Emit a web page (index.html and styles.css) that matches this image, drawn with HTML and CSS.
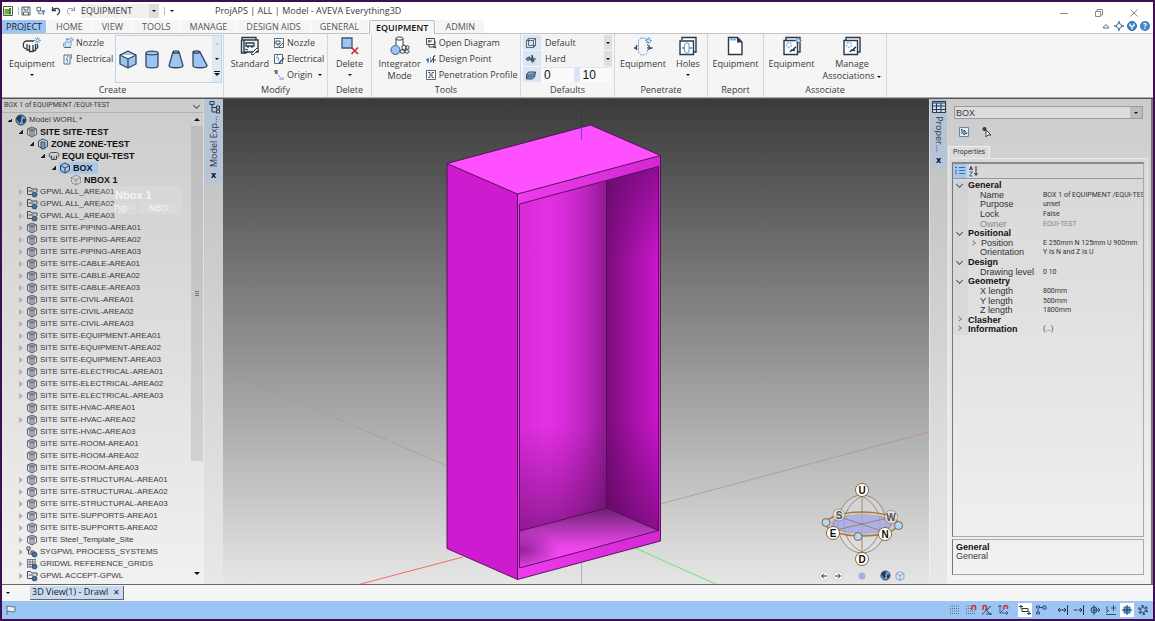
FILE: index.html
```html
<!DOCTYPE html>
<html lang="en">

<head>
    <meta charset="UTF-8">
    <meta name="viewport" content="width=device-width, initial-scale=1.0">
    <title>ProjAPS | ALL | Model - AVEVA Everything3D</title>
    <link rel="stylesheet" href="styles.css">
</head>

<body>
<!-- icon library -->
<svg class="defs" aria-hidden="true">
    <symbol id="i-site" viewBox="0 0 12 12"><path d="M1.500 3L6 1l4.500 2v5.500L6 11 1.500 8.500zM1.500 3h9M4 3.500V9.500M8 3.500V9.500M6 4v7M3.500 5L6 4l2.500 1" fill="none" stroke="#4b5764" stroke-width=".9"/></symbol>
    <symbol id="i-zone" viewBox="0 0 12 12"><path d="M1.500 3L6 1l4.500 2v5.500L6 11 1.500 8.500z" fill="none" stroke="#3f4b59"/><path d="M4 4h4v6l-2 1-2-1z" fill="#6c9fd2" stroke="#3f4b59"/></symbol>
    <symbol id="i-equi" viewBox="0 0 12 12"><path d="M3 7.500C.5 7.500.5 2.500 3.500 2.500h5c3 0 3 4.500 1 5M3.500 5.500v4h2.500V6.500M6 9.500h2.500V5.500" fill="none" stroke="#3f4b59"/></symbol>
    <symbol id="i-box" viewBox="0 0 12 12"><path d="M6 1l4.500 2.500v5L6 11 1.500 8.500v-5zM1.500 3.500L6 6l4.500-2.500M6 6v5" fill="#9cc5ef" stroke="#33475c" stroke-linejoin="round"/></symbol>
    <symbol id="i-nbox" viewBox="0 0 12 12"><path d="M6 1l4.500 2.500v5L6 11 1.500 8.500v-5zM1.500 3.500L6 6l4.500-2.500M6 6v5" fill="none" stroke="#777" stroke-dasharray="2 1"/></symbol>
    <symbol id="i-world" viewBox="0 0 12 12"><circle cx="6" cy="6" r="5" fill="#6fa3da" stroke="#2b3d50"/><path d="M3 2l3-.5 1 2L5.500 5 6 7 4.500 9.500 3 7 1.500 5zM8 5l2.500 0-.5 3-2 1.500L7.500 7z" fill="#26384c"/></symbol>
    <symbol id="i-gpwl" viewBox="0 0 12 12"><path d="M1.500 8.500v-7h3l1 1.500h5.500v3M2 8.500h4M2.500 5h5" fill="none" stroke="#3f4b59"/><circle cx="8.500" cy="8.500" r="2.500" fill="#456f9e" stroke="#26384c" stroke-width=".7"/></symbol>
    <symbol id="i-sys" viewBox="0 0 12 12"><path d="M1 1h3v3H1zM2.500 4v4H6M5 5h3v2H5z" fill="none" stroke="#3f4b59"/><circle cx="8.500" cy="8.500" r="2.500" fill="#456f9e" stroke="#26384c" stroke-width=".7"/></symbol>
    <symbol id="i-grid" viewBox="0 0 12 12"><path d="M1.500 1v9M4 1v9M6.500 1v9M9 1v6M1 1.500h9M1 4h9M1 6.500h8M1 9h5" fill="none" stroke="#5a6672" stroke-width=".8"/><circle cx="8.500" cy="8.500" r="2.500" fill="#456f9e" stroke="#26384c" stroke-width=".7"/></symbol>

    <symbol id="i-app" viewBox="0 0 10 10"><path d="M.5.500h9v9h-9z" fill="#fff" stroke="#4a5a50"/><path d="M1.500 3h4.500v5.500H1.500z" fill="#69b32d"/><path d="M6 2h2v6.500H6z" fill="#3f8a1f"/></symbol>
    <symbol id="i-save" viewBox="0 0 10 10"><path d="M1 1h8v8H1zM3 1v3h4V1M2.500 9V6h5v3" fill="none" stroke="#56606b"/></symbol>
    <symbol id="i-link" viewBox="0 0 11 10"><path d="M1 1h4v4H1zM3 5v3h3" fill="none" stroke="#56606b"/><path d="M6 4h4v3H6z" fill="#5b9bd5"/><path d="M8 7v2.500" stroke="#3c4854"/></symbol>
    <symbol id="i-undo" viewBox="0 0 10 10"><path d="M1.500 1v3.500H5M1.500 4.500C4 1 9 2 8.500 5.500 8.300 7.500 7 8.500 6 9" fill="none" stroke="#2d3e50" stroke-width="1.300"/></symbol>
    <symbol id="i-redo" viewBox="0 0 10 10"><path d="M8.500 1v3.500H5M8.500 4.500C6 1 1 2 1.500 5.500 1.700 7.500 3 8.500 4 9" fill="none" stroke="#8a929a"/></symbol>

    <symbol id="i-gear" viewBox="0 0 8 8"><path d="M4 0v8M0 4h8M1.200 1.200l5.600 5.600M6.800 1.200L1.200 6.800" stroke="#5b9bd5"/><circle cx="4" cy="4" r="1.800" fill="#f5f5f5" stroke="#5b9bd5"/></symbol>
    <symbol id="b-equip" viewBox="0 0 20 20"><path d="M5 13C0 13 0 5 5 5h7M15 8c2 3 0 5-2 5M5 8v6h2.500v-5M7.500 14v1.500H11V9M11 14.500h2.500V8" fill="none" stroke="#2b3a4a" stroke-width="1.300"/><use href="#i-gear" x="12" y="1" width="7" height="7"/></symbol>
    <symbol id="b-std" viewBox="0 0 20 20"><path d="M2 4v-2.500h14V4M2 4h16v12H4V4M1.500 4v13h5" fill="none" stroke="#2b3a4a" stroke-width="1.400"/><path d="M6 7h8v3H6zM8 10v2M12 10v2" fill="#fff" stroke="#2b3a4a" stroke-width="1.300"/><path d="M5 13l3 1M6 17l2-1M11 18l6-6 1.500 1.500L13 19z" fill="#fff" stroke="#2b3a4a"/></symbol>
    <symbol id="b-del" viewBox="0 0 20 20"><path d="M2 2h10v10H2z" fill="#9cc5f5" stroke="#41566d" stroke-width="1.300"/><path d="M11.500 11.500l6.500 6.500M18 11.500L11.500 18" stroke="#c8283f" stroke-width="1.700"/></symbol>
    <symbol id="b-integ" viewBox="0 0 20 20"><path d="M6 9V2.500C6 .5 13 .5 13 2.500V9M6 3c1 1.500 6 1.500 7 0" fill="#fff" stroke="#2b3a4a"/><circle cx="5.500" cy="14" r="4.500" fill="#9cc5f5" stroke="#34618e"/><ellipse cx="14" cy="11.500" rx="2" ry="2.500" fill="none" stroke="#2b3a4a"/><ellipse cx="12.500" cy="15.500" rx="2.500" ry="1.700" fill="none" stroke="#2b3a4a"/><ellipse cx="17" cy="15.500" rx="2.200" ry="1.700" fill="none" stroke="#2b3a4a"/><ellipse cx="17.500" cy="11.500" rx="1.500" ry="1.800" fill="none" stroke="#2b3a4a"/></symbol>
    <symbol id="b-pen" viewBox="0 0 20 20"><rect x="5.500" y="2" width="9" height="17" rx="4" fill="none" stroke="#5b9bd5" stroke-dasharray="2 1"/><path d="M1 12h3M3.500 9v5M16 12h3.500M16 9v5" stroke="#2b3a4a" stroke-width="1.300"/><use href="#i-gear" x="12" y="1" width="7" height="7"/></symbol>
    <symbol id="b-holes" viewBox="0 0 20 20"><path d="M4 4V1.500h14V16h-2M2 5h13.500v13.500H2z" fill="#fff" stroke="#2b3a4a" stroke-width="1.400"/><rect x="6.500" y="7" width="4.500" height="10" rx="2" fill="#fff" stroke="#5b9bd5"/><path d="M4 12h2M11.500 12H14" stroke="#2b3a4a"/></symbol>
    <symbol id="b-report" viewBox="0 0 20 20"><path d="M3.500 1.500h9l4.500 4.500v12.500H3.500z" fill="#fff" stroke="#2b3a4a" stroke-width="1.400"/><path d="M12 1.500V6.500h5z" fill="#2b3a4a"/><path d="M5 3.500h6" stroke="#7eb3ea" stroke-width="2"/></symbol>
    <symbol id="b-assoc" viewBox="0 0 20 20"><path d="M4 4V1.500h14V16h-2M2 4.500h13.500v14H2z" fill="#fff" stroke="#2b3a4a" stroke-width="1.400"/><circle cx="7" cy="9" r="2.500" fill="none" stroke="#84b5e8" stroke-width="1.400" stroke-dasharray="2 1"/><path d="M8 16c1-2 2-1 3-2s1-2 3-3M9 14l4 .5" fill="none" stroke="#2b3a4a" stroke-width="1.400"/></symbol>

    <symbol id="s-nozzle" viewBox="0 0 12 12"><path d="M3 5h6v3.500C8 11 4 11 3 8.500zM1.500 6v4M5 2v2" fill="#d5e7fa" stroke="#6ba3da"/><path d="M4 2h3M2 10.500h7" stroke="#596878"/><use href="#i-gear" x="7" y="0" width="5" height="5"/></symbol>
    <symbol id="s-elec" viewBox="0 0 12 12"><path d="M2 2h6v9H2z" fill="#fff" stroke="#596878"/><path d="M6 3L4 7h2L5 10" fill="none" stroke="#3f8bd8"/><path d="M9.500 1v5" stroke="#5b9bd5"/></symbol>
    <symbol id="s-mnozzle" viewBox="0 0 12 12"><path d="M1.500 1.500h9v9h-9z" fill="#fff" stroke="#596878"/><path d="M3 4h4v3H3zM5 7v2M6 10l4.500-4.500" fill="none" stroke="#3a4958"/></symbol>
    <symbol id="s-melec" viewBox="0 0 12 12"><path d="M1.500 1.500h8v9h-8z" fill="#fff" stroke="#596878"/><path d="M5 2L3.500 5H6L5 8" fill="none" stroke="#5b9bd5"/><path d="M6 10l5-5" stroke="#3a4958" stroke-width="1.500"/></symbol>
    <symbol id="s-origin" viewBox="0 0 12 12"><path d="M1 2h4M2 4h3M3 1v4" stroke="#3a4958"/><path d="M5 6l2 2" stroke="#888"/><path d="M6 10h5M8 8v3M10 8v3" stroke="#84b5e8"/></symbol>
    <symbol id="s-diagram" viewBox="0 0 12 12"><path d="M1.500 1.500h8v6h-8zM3 4h4M4 3v3M10 4v6H4V8" fill="none" stroke="#3a4958"/><path d="M8 9l3 2" stroke="#3a4958" stroke-width="1.500"/></symbol>
    <symbol id="s-point" viewBox="0 0 12 12"><path d="M1 7h3M8 7h3M3 5v5M8.500 3v7M6 9l4-7" fill="none" stroke="#3a4958"/><path d="M5.500 4v6" stroke="#5b9bd5"/></symbol>
    <symbol id="s-profile" viewBox="0 0 12 12"><path d="M1.500 1.500h9v9h-9z" fill="#fff" stroke="#596878"/><path d="M3 3.500h2v5H3M9 3.500H7v5h2M5 6h2" fill="none" stroke="#596878"/></symbol>
    <symbol id="s-wire" viewBox="0 0 12 12"><path d="M1.500 3.500h7v7h-7zM3.500 1.500h7v7M1.500 3.500l2-2M8.500 3.500l2-2M8.500 10.500l2-2M3.500 2v6.500h7" fill="none" stroke="#3a4958" stroke-width=".8"/></symbol>
    <symbol id="s-hard" viewBox="0 0 12 12"><path d="M1 6h10M4 3.500l3 5V2l2 7" fill="none" stroke="#3a4958" stroke-width="1.200"/><circle cx="3" cy="6" r="1.500" fill="#84b5e8" stroke="#3a4958"/></symbol>
    <symbol id="s-level" viewBox="0 0 12 12"><path d="M1.500 6l2-3h7l-1 5-2 2h-6z" fill="#84b5e8" stroke="#3a4958"/><path d="M1.500 6h6l3-3M1.500 8h6l2-2" fill="none" stroke="#3a4958"/></symbol>

    <symbol id="g-box" viewBox="0 0 20 22"><path d="M10 3l8 4v9l-8 4-8-4V7zM2 7l8 4 8-4M10 11v9" fill="#9cc5f5" stroke="#33475c" stroke-width="1.300" stroke-linejoin="round"/></symbol>
    <symbol id="g-cyl" viewBox="0 0 20 22"><path d="M4 5v13c0 2.500 12 2.500 12 0V5c0-2.500-12-2.500-12 0 0 2.500 12 2.500 12 0" fill="#9cc5f5" stroke="#33475c" stroke-width="1.300"/></symbol>
    <symbol id="g-cone" viewBox="0 0 20 22"><path d="M7 4L3 17.500c0 3 14 3 14 0L13 4c0-1.500-6-1.500-6 0 0 1.500 6 1.500 6 0" fill="#9cc5f5" stroke="#33475c" stroke-width="1.300"/></symbol>
    <symbol id="g-snout" viewBox="0 0 20 22"><path d="M3 4v13.500c0 3 14 3 14 0L10 4c0-1.500-7-1.500-7 0 0 1.500 7 1.500 7 0" fill="#9cc5f5" stroke="#33475c" stroke-width="1.300"/></symbol>
</svg>

<div class="window">
    <header class="title-bar">
        <div class="quick-access">
            <svg class="icon-10"><use href="#i-app"/></svg>
            <span class="divider"></span>
            <button class="icon-btn" aria-label="Save"><svg class="icon-10"><use href="#i-save"/></svg></button>
            <button class="icon-btn" aria-label="Link"><svg class="icon-10"><use href="#i-link"/></svg></button>
            <button class="icon-btn" aria-label="Undo"><svg class="icon-10"><use href="#i-undo"/></svg></button>
            <button class="icon-btn" aria-label="Redo"><svg class="icon-10"><use href="#i-redo"/></svg></button>
            <span class="select quick-select"><select aria-label="Module"><option>EQUIPMENT</option></select></span>
            <span class="divider"></span>
            <button class="icon-btn" aria-label="More"><span class="caret"></span></button>
        </div>
        <div class="window-title">ProjAPS | ALL | Model - AVEVA Everything3D</div>
        <div class="window-controls">
            <button class="icon-btn" aria-label="Minimize"><svg class="icon-10" viewBox="0 0 10 10"><path d="M1 5.500h8" stroke="#888"/></svg></button>
            <button class="icon-btn" aria-label="Restore"><svg class="icon-10" viewBox="0 0 10 10"><path d="M1.500 3.500h5v5h-5zM3 3V1.500h5.500V7H7" fill="none" stroke="#888"/></svg></button>
            <button class="icon-btn" aria-label="Close"><svg class="icon-10" viewBox="0 0 10 10"><path d="M1.500 1.500l7 7M8.500 1.500l-7 7" stroke="#888"/></svg></button>
        </div>
    </header>

    <nav class="tabs">
        <button class="tab project">PROJECT</button>
        <button class="tab">HOME</button>
        <button class="tab">VIEW</button>
        <button class="tab">TOOLS</button>
        <button class="tab">MANAGE</button>
        <button class="tab">DESIGN AIDS</button>
        <button class="tab">GENERAL</button>
        <button class="tab active">EQUIPMENT</button>
        <button class="tab">ADMIN</button>
        <div class="help-icons">
            <button class="icon-btn" aria-label="Collapse"><svg class="icon-10" viewBox="0 0 10 10"><path d="M2.500 6L5 3.500 7.500 6v1h-5z" fill="#fff" stroke="#596878"/></svg></button>
            <button class="icon-btn" aria-label="Focus"><svg class="icon-10" viewBox="0 0 10 10"><path d="M5 0v3M5 7v3M0 5h3M7 5h3" stroke="#5b9bd5" stroke-width="2"/><circle cx="5" cy="5" r="2.500" fill="#fff" stroke="#596878"/></svg></button>
            <button class="icon-btn" aria-label="Account"><svg class="icon-10" viewBox="0 0 10 10"><circle cx="5" cy="5" r="4.500" fill="#3f87c9" stroke="#2a659e"/><path d="M3 2.500v2l2 1 2-1v-2M5 5v3.500" fill="none" stroke="#fff" stroke-width="1.300"/></svg></button>
            <button class="icon-btn help" aria-label="Help">?</button>
        </div>
    </nav>

    <section class="ribbon">
        <div class="group g-create">
            <div class="group-body">
                <button class="big"><svg class="icon-20"><use href="#b-equip"/></svg>Equipment<span class="caret"></span></button>
                <div class="stack">
                    <button class="small"><svg class="icon-12"><use href="#s-nozzle"/></svg>Nozzle</button>
                    <button class="small"><svg class="icon-12"><use href="#s-elec"/></svg>Electrical</button>
                </div>
                <div class="gallery">
                    <button class="shape" aria-label="Box"><svg><use href="#g-box"/></svg></button>
                    <button class="shape" aria-label="Cylinder"><svg><use href="#g-cyl"/></svg></button>
                    <button class="shape" aria-label="Cone"><svg><use href="#g-cone"/></svg></button>
                    <button class="shape" aria-label="Snout"><svg><use href="#g-snout"/></svg></button>
                    <div class="gallery-scroll">
                        <span class="caret up"></span>
                        <span class="caret"></span>
                        <span class="caret more"></span>
                    </div>
                </div>
            </div>
            <div class="group-label">Create</div>
        </div>
        <div class="group g-modify">
            <div class="group-body">
                <button class="big"><svg class="icon-20"><use href="#b-std"/></svg>Standard</button>
                <div class="stack">
                    <button class="small"><svg class="icon-12"><use href="#s-mnozzle"/></svg>Nozzle</button>
                    <button class="small"><svg class="icon-12"><use href="#s-melec"/></svg>Electrical</button>
                    <button class="small"><svg class="icon-12"><use href="#s-origin"/></svg>Origin<span class="caret"></span></button>
                </div>
            </div>
            <div class="group-label">Modify</div>
        </div>
        <div class="group g-delete">
            <div class="group-body">
                <button class="big"><svg class="icon-20"><use href="#b-del"/></svg>Delete<span class="caret"></span></button>
            </div>
            <div class="group-label">Delete</div>
        </div>
        <div class="group g-tools">
            <div class="group-body">
                <button class="big"><svg class="icon-20"><use href="#b-integ"/></svg>Integrator<br>Mode</button>
                <div class="stack">
                    <button class="small"><svg class="icon-12"><use href="#s-diagram"/></svg>Open Diagram</button>
                    <button class="small"><svg class="icon-12"><use href="#s-point"/></svg>Design Point</button>
                    <button class="small"><svg class="icon-12"><use href="#s-profile"/></svg>Penetration Profile</button>
                </div>
            </div>
            <div class="group-label">Tools</div>
        </div>
        <div class="group g-defaults">
            <div class="defaults">
                <div class="default-row"><svg class="icon-12"><use href="#s-wire"/></svg><span class="select"><select aria-label="Representation"><option>Default</option></select></span></div>
                <div class="default-row"><svg class="icon-12"><use href="#s-hard"/></svg><span class="select"><select aria-label="Obstruction"><option>Hard</option></select></span></div>
                <div class="default-row"><svg class="icon-12"><use href="#s-level"/></svg><input type="text" value="0" aria-label="Level from"><span class="row-gap"></span><input type="text" value="10" aria-label="Level to"></div>
            </div>
            <div class="group-label">Defaults</div>
        </div>
        <div class="group g-penetrate">
            <div class="group-body">
                <button class="big"><svg class="icon-20"><use href="#b-pen"/></svg>Equipment</button>
                <button class="big"><svg class="icon-20"><use href="#b-holes"/></svg>Holes<span class="caret"></span></button>
            </div>
            <div class="group-label">Penetrate</div>
        </div>
        <div class="group g-report">
            <div class="group-body">
                <button class="big"><svg class="icon-20"><use href="#b-report"/></svg>Equipment</button>
            </div>
            <div class="group-label">Report</div>
        </div>
        <div class="group g-associate">
            <div class="group-body">
                <button class="big"><svg class="icon-20" viewBox="0 0 20 20"><use href="#b-assoc"/><use href="#i-gear" x="13" y="1" width="7" height="7"/></svg>Equipment</button>
                <button class="big"><svg class="icon-20"><use href="#b-assoc"/></svg>Manage<span>Associations<span class="caret inline"></span></span></button>
            </div>
            <div class="group-label">Associate</div>
        </div>
    </section>

    <main class="workspace">
        <aside class="explorer">
            <div class="select current-element"><select aria-label="Current element"><option>BOX 1 of EQUIPMENT /EQUI-TEST</option></select></div>
            <div class="explorer-body">
                <ul class="tree">
                    <li><div class="node open"><svg><use href="#i-world"/></svg><span>Model WORL *</span></div>
                        <ul>
                            <li><div class="node open bold"><svg><use href="#i-site"/></svg><span>SITE SITE-TEST</span></div>
                                <ul>
                                    <li><div class="node open bold"><svg><use href="#i-zone"/></svg><span>ZONE ZONE-TEST</span></div>
                                        <ul>
                                            <li><div class="node open bold"><svg><use href="#i-equi"/></svg><span>EQUI EQUI-TEST</span></div>
                                                <ul>
                                                    <li><div class="node open bold selected"><svg><use href="#i-box"/></svg><span>BOX</span></div>
                                                        <ul>
                                                            <li><div class="node bold"><svg><use href="#i-nbox"/></svg><span>NBOX 1</span></div></li>
                                                        </ul>
                                                    </li>
                                                </ul>
                                            </li>
                                        </ul>
                                    </li>
                                </ul>
                            </li>
                            <li><div class="node closed"><svg><use href="#i-gpwl"/></svg><span>GPWL ALL_AREA01</span></div></li>
                            <li><div class="node closed"><svg><use href="#i-gpwl"/></svg><span>GPWL ALL_AREA02</span></div></li>
                            <li><div class="node closed"><svg><use href="#i-gpwl"/></svg><span>GPWL ALL_AREA03</span></div></li>
                            <li><div class="node closed"><svg><use href="#i-site"/></svg><span>SITE SITE-PIPING-AREA01</span></div></li>
                            <li><div class="node closed"><svg><use href="#i-site"/></svg><span>SITE SITE-PIPING-AREA02</span></div></li>
                            <li><div class="node closed"><svg><use href="#i-site"/></svg><span>SITE SITE-PIPING-AREA03</span></div></li>
                            <li><div class="node closed"><svg><use href="#i-site"/></svg><span>SITE SITE-CABLE-AREA01</span></div></li>
                            <li><div class="node closed"><svg><use href="#i-site"/></svg><span>SITE SITE-CABLE-AREA02</span></div></li>
                            <li><div class="node closed"><svg><use href="#i-site"/></svg><span>SITE SITE-CABLE-AREA03</span></div></li>
                            <li><div class="node closed"><svg><use href="#i-site"/></svg><span>SITE SITE-CIVIL-AREA01</span></div></li>
                            <li><div class="node closed"><svg><use href="#i-site"/></svg><span>SITE SITE-CIVIL-AREA02</span></div></li>
                            <li><div class="node closed"><svg><use href="#i-site"/></svg><span>SITE SITE-CIVIL-AREA03</span></div></li>
                            <li><div class="node closed"><svg><use href="#i-site"/></svg><span>SITE SITE-EQUIPMENT-AREA01</span></div></li>
                            <li><div class="node closed"><svg><use href="#i-site"/></svg><span>SITE SITE-EQUIPMENT-AREA02</span></div></li>
                            <li><div class="node closed"><svg><use href="#i-site"/></svg><span>SITE SITE-EQUIPMENT-AREA03</span></div></li>
                            <li><div class="node closed"><svg><use href="#i-site"/></svg><span>SITE SITE-ELECTRICAL-AREA01</span></div></li>
                            <li><div class="node closed"><svg><use href="#i-site"/></svg><span>SITE SITE-ELECTRICAL-AREA02</span></div></li>
                            <li><div class="node closed"><svg><use href="#i-site"/></svg><span>SITE SITE-ELECTRICAL-AREA03</span></div></li>
                            <li><div class="node"><svg><use href="#i-site"/></svg><span>SITE SITE-HVAC-AREA01</span></div></li>
                            <li><div class="node closed"><svg><use href="#i-site"/></svg><span>SITE SITE-HVAC-AREA02</span></div></li>
                            <li><div class="node"><svg><use href="#i-site"/></svg><span>SITE SITE-HVAC-AREA03</span></div></li>
                            <li><div class="node"><svg><use href="#i-site"/></svg><span>SITE SITE-ROOM-AREA01</span></div></li>
                            <li><div class="node"><svg><use href="#i-site"/></svg><span>SITE SITE-ROOM-AREA02</span></div></li>
                            <li><div class="node"><svg><use href="#i-site"/></svg><span>SITE SITE-ROOM-AREA03</span></div></li>
                            <li><div class="node closed"><svg><use href="#i-site"/></svg><span>SITE SITE-STRUCTURAL-AREA01</span></div></li>
                            <li><div class="node closed"><svg><use href="#i-site"/></svg><span>SITE SITE-STRUCTURAL-AREA02</span></div></li>
                            <li><div class="node closed"><svg><use href="#i-site"/></svg><span>SITE SITE-STRUCTURAL-AREA03</span></div></li>
                            <li><div class="node closed"><svg><use href="#i-site"/></svg><span>SITE SITE-SUPPORTS-AREA01</span></div></li>
                            <li><div class="node closed"><svg><use href="#i-site"/></svg><span>SITE SITE-SUPPORTS-AREA02</span></div></li>
                            <li><div class="node closed"><svg><use href="#i-site"/></svg><span>SITE Steel_Template_Site</span></div></li>
                            <li><div class="node closed"><svg><use href="#i-sys"/></svg><span>SYGPWL PROCESS_SYSTEMS</span></div></li>
                            <li><div class="node closed"><svg><use href="#i-grid"/></svg><span>GRIDWL REFERENCE_GRIDS</span></div></li>
                            <li><div class="node closed"><svg><use href="#i-gpwl"/></svg><span>GPWL ACCEPT-GPWL</span></div></li>
                        </ul>
                    </li>
                </ul>
                <div class="scrollbar">
                    <span class="scroll-arrow up"></span>
                    <div class="scroll-track"><div class="scroll-thumb"><span class="grip"></span></div></div>
                    <span class="scroll-arrow down"></span>
                </div>
                <!-- fading drag tooltip -->
                <div class="ghost-tip">
                    <div class="ghost-title">Nbox 1</div>
                    <div class="ghost-row"><span class="ghost-key">Typ&middot;</span><span class="ghost-value">NBO</span></div>
                </div>
            </div>
        </aside>
        <div class="side-strip left">
            <div class="side-tab">
                <svg class="side-icon" viewBox="0 0 14 14"><path d="M3 1.500h4v3H3zM5 5v7h4M5 7.500h4M9.500 6h3v3h-3zM9.500 10h3v3h-3z" fill="none" stroke="#2b3a4a"/></svg>
                <span class="side-text">Model Exp...</span>
                <button class="side-close" aria-label="Close">x</button>
            </div>
        </div>

        <div class="viewport">
            <svg class="scene" viewBox="223 98 706 485" preserveAspectRatio="xMidYMid slice">
                <defs>
                    <linearGradient id="backWall"><stop offset="0" stop-color="#d62bd6"/><stop offset=".3" stop-color="#e330e3"/><stop offset=".5" stop-color="#d92cd9"/><stop offset=".75" stop-color="#bd25bf"/><stop offset="1" stop-color="#8e1a92"/></linearGradient>
                    <linearGradient id="rightWall"><stop offset="0" stop-color="#790c7b"/><stop offset=".5" stop-color="#a311a5"/><stop offset="1" stop-color="#cb17cb"/></linearGradient>
                    <linearGradient id="shadeTop" x1="0" y1="0" x2="0" y2="1"><stop offset="0" stop-color="#600a66" stop-opacity=".6"/><stop offset=".25" stop-color="#600a66" stop-opacity="0"/></linearGradient>
                    <linearGradient id="shadeBottom" x1="0" y1="0" x2="0" y2="1"><stop offset=".7" stop-color="#4a064e" stop-opacity="0"/><stop offset="1" stop-color="#4a064e" stop-opacity=".5"/></linearGradient>
                    <linearGradient id="floor" x1="0" y1="0" x2="0" y2="1"><stop offset="0" stop-color="#6a2170"/><stop offset=".3" stop-color="#a834ac"/><stop offset=".65" stop-color="#ee45ee"/><stop offset="1" stop-color="#f44bf4"/></linearGradient>
                    <linearGradient id="frontTop" x1="0" x2="1"><stop offset="0" stop-color="#ed3bed"/><stop offset="1" stop-color="#d228d2"/></linearGradient>
                    <radialGradient id="floorDark"><stop offset="0" stop-color="#7a1c80" stop-opacity=".8"/><stop offset="1" stop-color="#7a1c80" stop-opacity="0"/></radialGradient>
                    <clipPath id="floorClip"><path d="M520 530l87-23 52 22.500L520 567z"/></clipPath>
                </defs>
                <path d="M222 368l225 97" stroke="#86a889" stroke-width=".6"/>
                <path d="M660 503l269-72" stroke="#b98f8f" stroke-width=".8"/>
                <path d="M357 584l106-28" stroke="#f26d6d"/>
                <path d="M635 547l83 37" stroke="#6fe46f"/>
                <path d="M581.500 98v30" stroke="#38384c"/>
                <path d="M581.500 562v22" stroke="#aab2d8"/>
                <path d="M447 162.500l70.500 30.500v385.500L447 547.500z" fill="#cf1bcf"/>
                <path d="M517.500 193l143-38.500V540l-143 38.500z" fill="url(#frontTop)"/>
                <path d="M447 162.500L590.500 124l70 30.500-143 38.500z" fill="#ff50ff"/>
                <path d="M519.500 203l87-23v327l-87 23z" fill="url(#backWall)"/>
                <path d="M519.500 203l87-23v327l-87 23z" fill="url(#shadeBottom)"/>
                <path d="M606.500 180l52-14.500v364l-52-22.500z" fill="url(#rightWall)"/>
                <path d="M606.500 180l52-14.500v364l-52-22.500z" fill="url(#shadeTop)"/>
                <path d="M606.500 180l52-14.500v364l-52-22.500z" fill="url(#shadeBottom)"/>
                <path d="M519.500 530l87-23 52 22.500-139 37.500z" fill="url(#floor)"/>
                <g clip-path="url(#floorClip)"><ellipse cx="522" cy="549" rx="36" ry="22" fill="url(#floorDark)"/></g>
                <path d="M447 162.500L590.500 124l70 30.500V540l-143 38.500-70.500-31zl70.500 30.500 143-38.500M517.500 193v385.500M519.500 567V203l139-37.500v364L519.500 567M606.500 180v327l-87 23M606.500 507l52 22.500" fill="none" stroke="#4d0b50" stroke-width=".9"/>
                <path d="M581.500 126v13" stroke="#7146e0"/>

                <!-- view compass -->
                <g fill="none" stroke="#8b7763" stroke-width=".8">
                    <ellipse cx="862" cy="523" rx="24" ry="29" fill="#e8e8e8" fill-opacity=".35"/>
                    <path d="M862 495c-24 12-24 44 0 56M862 495c24 12 24 44 0 56M862 495v56"/>
                    <path d="M833 516l-6 5 6 7 29 7 23-2 13-8-4-7-32-4z" fill="#a5a9e4" fill-opacity=".45" stroke="none"/>
                    <ellipse cx="862" cy="523" rx="29" ry="10" fill="#a3a8e8" fill-opacity=".65"/>
                    <path d="M840 516l45 15M836 529l52-12"/>
                    <ellipse cx="862" cy="523" rx="36" ry="12" stroke="#a5793f" stroke-width="1.500"/>
                    <ellipse cx="862" cy="523" rx="34" ry="10" stroke="#e8ded2"/>
                </g>
                <g stroke="#8a6233" fill="#fff">
                    <circle cx="862" cy="489" r="6.500"/><circle cx="862" cy="558" r="6.500"/>
                    <circle cx="839" cy="514" r="6" fill-opacity=".5" stroke-opacity=".5"/><circle cx="891" cy="516" r="6.500" fill-opacity=".5" stroke-opacity=".5"/>
                    <circle cx="833" cy="532" r="6.500"/><circle cx="885" cy="533" r="6.500"/>
                    <g fill="#b3d6fb"><circle cx="826" cy="521.500" r="4"/><circle cx="898.500" cy="524.500" r="4"/><circle cx="858" cy="535.500" r="4"/></g>
                </g>
                <g class="compass-text">
                    <text x="862" y="493">U</text><text x="862" y="562">D</text><text x="833" y="536">E</text><text x="885" y="537">N</text>
                    <text class="far" x="839" y="518">S</text><text class="far" x="891" y="520">W</text>
                </g>
                <circle cx="824" cy="575" r="4.500" fill="#fff" stroke="#ccc"/><path d="M827 575h-5M824 572.500l-2.500 2.500 2.500 2.500" fill="none" stroke="#222"/>
                <circle cx="838" cy="575" r="4.500" fill="#fff" stroke="#ccc"/><path d="M835 575h5M838 572.500l2.500 2.500-2.500 2.500" fill="none" stroke="#222"/>
                <circle cx="862" cy="575" r="3.500" fill="#a9aee0"/>
                <use href="#i-world" x="880" y="569" width="11" height="11"/>
                <path d="M900 570.500l4 2v5l-4 2-4-2v-5zM896 572.500l4 2 4-2M900 574.500v5" fill="#d6e4f2" stroke="#7d97b0" stroke-width=".8"/>
            </svg>
        </div>

        <div class="side-strip right">
            <div class="side-tab">
                <svg class="side-icon" viewBox="0 0 14 14"><path d="M.5 1.500h13v11H.5z" fill="#c7dcf2" stroke="#2b3a4a"/><path d="M.5 3h13M.5 6h13M.5 9.500h13M4.500 3v9M9 3v9" stroke="#2b3a4a"/></svg>
                <span class="side-text">Proper...</span>
                <button class="side-close" aria-label="Close">x</button>
            </div>
        </div>
        <aside class="properties">
            <div class="select element-select"><select aria-label="Element"><option>BOX</option></select></div>
            <div class="pick-tools">
                <button class="icon-btn" aria-label="Pick element"><svg class="icon-12" viewBox="0 0 12 12"><path d="M1.500 1.500h9v9h-9z" fill="#e4eefa" stroke="#5b87b5"/><path d="M3 4l1-1v5M6 4v5l1.500-1.500H9z" fill="none" stroke="#2b3a4a"/></svg></button>
                <button class="icon-btn" aria-label="Pick point"><svg class="icon-12" viewBox="0 0 12 12"><circle cx="3.500" cy="3" r="2" fill="#2b3a4a"/><path d="M5 4v7l2-2h3z" fill="#fff" stroke="#2b3a4a"/></svg></button>
            </div>
            <div class="page-tabs"><button class="page-tab">Properties</button></div>
            <div class="page">
                <div class="grid-box">
                    <div class="grid-tools">
                        <button class="icon-btn on" aria-label="Categorized"><svg class="icon-12" viewBox="0 0 12 12"><path d="M1 2.500h2M5 2.500h6M5 5.500h6M5 8.500h6M2 4.500v5" stroke="#2f6fb0"/></svg></button>
                        <button class="icon-btn" aria-label="Alphabetical"><svg class="icon-12" viewBox="0 0 12 12"><path d="M1.500 5L3 1.500 4.500 5M2 4h2" fill="none" stroke="#333"/><path d="M1.500 7h3l-3 4h3" fill="none" stroke="#2f6fb0"/><path d="M8 1v9M6.500 8L8 10.500 9.500 8" fill="none" stroke="#333"/></svg></button>
                    </div>
                    <table class="prop-grid">
                        <tr class="cat"><td class="exp open"></td><th>General</th><td></td></tr>
                        <tr><td class="exp"></td><th>Name</th><td>BOX 1 of EQUIPMENT /EQUI-TES</td></tr>
                        <tr><td class="exp"></td><th>Purpose</th><td>unset</td></tr>
                        <tr><td class="exp"></td><th>Lock</th><td>False</td></tr>
                        <tr class="readonly"><td class="exp"></td><th>Owner</th><td>EQUI-TEST</td></tr>
                        <tr class="cat"><td class="exp open"></td><th>Positional</th><td></td></tr>
                        <tr><td class="exp"></td><th class="sub">Position</th><td>E 250mm N 125mm U 900mm</td></tr>
                        <tr><td class="exp"></td><th>Orientation</th><td>Y is N and Z is U</td></tr>
                        <tr class="cat"><td class="exp open"></td><th>Design</th><td></td></tr>
                        <tr><td class="exp"></td><th>Drawing level</th><td>0 10</td></tr>
                        <tr class="cat"><td class="exp open"></td><th>Geometry</th><td></td></tr>
                        <tr><td class="exp"></td><th>X length</th><td>800mm</td></tr>
                        <tr><td class="exp"></td><th>Y length</th><td>500mm</td></tr>
                        <tr><td class="exp"></td><th>Z length</th><td>1800mm</td></tr>
                        <tr class="cat"><td class="exp shut"></td><th>Clasher</th><td></td></tr>
                        <tr class="cat"><td class="exp shut"></td><th>Information</th><td>(...)</td></tr>
                    </table>
                </div>
                <div class="help-box"><strong>General</strong><span>General</span></div>
            </div>
        </aside>
    </main>

    <div class="doc-tabs">
        <span class="caret"></span>
        <div class="doc-tab">3D View(1) - Drawl<button class="icon-btn" aria-label="Close tab">&#10005;</button></div>
    </div>

    <footer class="status-bar">
        <svg class="icon-12" viewBox="0 0 12 12"><path d="M2 11V2M2 2.500c3-1.500 4 1.500 8 0v5c-4 1.500-5-1.500-8 0" fill="#e8f1fb" stroke="#56708c"/></svg>
        <div class="status-tools">
            <button class="icon-btn" aria-label="Grid"><svg class="icon-12" viewBox="0 0 12 12"><path d="M1 2h10M1 4.500h10M1 7h10M1 9.500h10" stroke="#56708c" stroke-dasharray="1 1"/></svg></button>
            <button class="icon-btn" aria-label="Snap grid"><svg class="icon-12" viewBox="0 0 12 12"><path d="M1 2h5M1 4.500h5M1 7h10M1 9.500h10" stroke="#56708c" stroke-dasharray="1 1"/><path d="M7 6V3c0-2 3.500-2 3.500 0v3" fill="none" stroke="#d02c3c" stroke-width="1.600"/></svg></button>
            <button class="icon-btn" aria-label="Snap angle"><svg class="icon-12" viewBox="0 0 12 12"><path d="M1 10.500L10 2M4 5l6 5.500M5 10h6" stroke="#2b3a4a"/><path d="M2 6V3c0-2 3.500-2 3.500 0v3" fill="none" stroke="#d02c3c" stroke-width="1.600"/></svg></button>
            <button class="icon-btn" aria-label="Snap axis"><svg class="icon-12" viewBox="0 0 12 12"><path d="M3 1v8h8M1 3l2-2 2 2M3 9l5-5M9 7l2 2-2 2" fill="none" stroke="#34618e"/><path d="M7 5V3c0-2 3.500-2 3.500 0v2" fill="none" stroke="#d02c3c" stroke-width="1.600"/></svg></button>
            <span class="tool-gap"></span>
            <button class="icon-btn on" aria-label="Route"><svg class="icon-12" viewBox="0 0 12 12"><path d="M0 2.500h4M2 1v4M3 4.500h6v3H3zM8 9.500h4M10 7v4" fill="none" stroke="#2b3a4a"/></svg></button>
            <button class="icon-btn" aria-label="Nodes"><svg class="icon-12" viewBox="0 0 12 12"><path d="M1.500 2h3v2h-3zM8 2h3v3H8zM1.500 8h3v2h-3zM5 3.500h3M3 5v3" fill="none" stroke="#34506e"/></svg></button>
            <span class="tool-gap"></span>
            <button class="icon-btn" aria-label="Distance"><svg class="icon-12" viewBox="0 0 12 12"><path d="M1 6h8M3 4L1 6l2 2M7 4l2 2-2 2M10.500 1v10" fill="none" stroke="#24364a"/></svg></button>
            <button class="icon-btn" aria-label="Extend"><svg class="icon-12" viewBox="0 0 12 12"><path d="M1 6h3M5 6h4M7 4l2 2-2 2M10.500 1v10" fill="none" stroke="#24364a"/></svg></button>
            <button class="icon-btn" aria-label="Centre"><svg class="icon-12" viewBox="0 0 12 12"><circle cx="5" cy="6" r="3" fill="#6fa3da" stroke="#34506e"/><path d="M5 1v10M4 6h7M9 4l2 2-2 2" fill="none" stroke="#34506e"/></svg></button>
            <button class="icon-btn" aria-label="Offset"><svg class="icon-12" viewBox="0 0 12 12"><path d="M2 2v5M1 10.500h10M1 9l3-3M6 4h5M8.500 1v6" fill="none" stroke="#34506e"/></svg></button>
            <button class="icon-btn on" aria-label="Centre snap"><svg class="icon-12" viewBox="0 0 12 12"><path d="M3 3h6v6H3z" fill="#6fa3da" stroke="#2f6fb0"/><path d="M6 1v10M1 6h10" stroke="#12324f"/></svg></button>
            <button class="icon-btn" aria-label="Settings"><svg class="icon-12" viewBox="0 0 12 12"><circle cx="6" cy="6" r="4" fill="none" stroke="#34506e" stroke-width="2" stroke-dasharray="2.200 2"/><circle cx="6" cy="6" r="2.500" fill="none" stroke="#34506e"/></svg></button>
        </div>
    </footer>
</div>
</body>

</html>
```
FILE: styles.css
```css
* {
    box-sizing: border-box;
}

body {
    margin: 0;
    font-family: "Open Sans", "Noto Sans", sans-serif;
    font-size: 9px;
    line-height: 12px;
    color: #3a3a3a;
}

button,
select,
input {
    font: inherit;
    color: inherit;
    border: none;
    padding: 0;
    margin: 0;
    background: none;
}

svg {
    display: block;
    flex: none;
}

.defs {
    display: none;
}

.window {
    display: flex;
    flex-direction: column;
    height: 100vh;
    border: 2px solid #3d0f52;
    background: #fff;
}

.icon-10 {
    width: 10px;
    height: 10px;
}

.icon-12 {
    width: 12px;
    height: 12px;
}

.icon-20 {
    width: 20px;
    height: 20px;
}

.icon-btn {
    display: flex;
    align-items: center;
    justify-content: center;
}

.caret {
    width: 0;
    height: 0;
    border: 2px solid transparent;
    border-top-color: #111;
    border-bottom: none;
}

.caret.up {
    border-top: none;
    border-bottom: 2px solid #bbb;
}

.caret.inline {
    display: inline-block;
    margin-left: 3px;
    vertical-align: middle;
}

/* drop-downs */
.select {
    position: relative;
    display: flex;
    min-width: 0;
}

.select select {
    appearance: none;
    width: 100%;
    border-radius: 0;
}

.select::after {
    content: "";
    position: absolute;
    right: 3px;
    top: calc(50% - 1px);
    border: 2px solid transparent;
    border-top-color: #111;
    border-bottom: none;
    pointer-events: none;
}

/* title bar */
.title-bar {
    display: flex;
    align-items: center;
    flex: none;
    height: 18px;
}

.quick-access {
    display: flex;
    align-items: center;
    gap: 5px;
    width: 213px;
    padding-left: 1px;
}

.quick-access .divider:first-of-type {
    margin-right: -3px;
}

.divider {
    width: 1px;
    height: 8px;
    background: #bbb;
}

.quick-select {
    width: 78px;
    height: 14px;
    background: linear-gradient(90deg, #f0f0f0 68px, #dedede 68px);
}

.window-title {
    flex: 1;
}

.window-controls {
    display: flex;
    gap: 25px;
    padding: 4px 14px 0 0;
}

/* ribbon tabs */
.tabs {
    display: flex;
    align-items: flex-end;
    gap: 1px;
    flex: none;
    height: 14px;
    border-bottom: 1px solid #c4c4c4;
}

.tab {
    height: 13px;
    padding: 1px 9px 0;
    background: #f5f5f5;
    color: #555;
}

.tab.project {
    padding: 0 4px;
    background: #9bc3f3;
    color: #223;
}

.tab.active {
    height: 14px;
    margin-bottom: -1px;
    padding: 0 6px;
    border: 1px solid #b5bfca;
    border-bottom: none;
    border-radius: 2px 2px 0 0;
    color: #111;
    font-weight: 600;
}

.help-icons {
    display: flex;
    gap: 3px;
    margin: 0 3px 2px auto;
}

.help {
    width: 10px;
    height: 10px;
    border-radius: 50%;
    background: #3f87c9;
    color: #fff;
    font-weight: bold;
    font-size: 8px;
    line-height: 10px;
}

/* ribbon */
.ribbon {
    display: flex;
    flex: none;
    height: 64px;
    background: #f5f5f5;
    border-bottom: 1px solid #a8a8a8;
}

.group {
    display: flex;
    flex-direction: column;
    flex: none;
    border-right: 1px solid #cbd9ea;
}

.group-body {
    display: flex;
    justify-content: center;
    height: 49px;
}

.group-label {
    padding-top: 1px;
    text-align: center;
}

.g-create {
    width: 222px;
}

.g-create .group-body {
    justify-content: flex-start;
}

.g-modify {
    width: 104px;
}

.g-delete {
    width: 44px;
}

.g-tools {
    width: 149px;
}

.g-defaults {
    width: 94px;
}

.g-penetrate {
    width: 93px;
}

.g-report {
    width: 56px;
}

.g-associate {
    width: 123px;
}

.big {
    display: flex;
    flex-direction: column;
    align-items: center;
    padding: 2px 4px 0;
    min-width: 36px;
    white-space: nowrap;
}

.big .icon-20 {
    margin-bottom: 2px;
}

.big > .caret {
    margin-top: 4px;
}

.g-create .big {
    width: 60px;
}

.stack {
    display: flex;
    flex-direction: column;
    padding-top: 1px;
}

.small {
    display: flex;
    align-items: center;
    gap: 2px;
    height: 16px;
    white-space: nowrap;
}

.small .caret {
    margin-left: 3px;
}

.gallery {
    display: flex;
    align-items: center;
    flex: 1;
    margin: 1px 1px 0 2px;
    border: 1px solid #c3d3e6;
}

.shape {
    flex: 1;
    display: flex;
    justify-content: center;
}

.shape svg {
    width: 20px;
    height: 22px;
}

.gallery-scroll {
    display: flex;
    flex-direction: column;
    align-items: center;
    justify-content: space-around;
    align-self: stretch;
    width: 9px;
    background: #dfe8f3;
}

.caret.more {
    border-width: 3px 3px 0;
}

.caret.more::before {
    content: "";
    display: block;
    width: 6px;
    height: 1px;
    margin: -5px 0 0 -3px;
    background: #111;
}

.defaults {
    display: flex;
    flex-direction: column;
    gap: 1px;
    height: 49px;
    padding: 1px 2px 0;
}

.default-row {
    display: flex;
    align-items: center;
    height: 15px;
    background: #dbe6f4;
}

.default-row > .icon-12 {
    margin: 0 4px 0 2px;
}

.default-row .select {
    flex: 1;
    height: 15px;
    padding-left: 4px;
    background: linear-gradient(270deg, #dedede 8px, #f3f3f3 8px);
}

.default-row .select::after {
    right: 2px;
}

.default-row input {
    flex: 1;
    min-width: 0;
    height: 14px;
    padding-left: 3px;
    background: #fafafa;
    font: 12px/14px "Liberation Sans", Arial, sans-serif;
    color: #111;
}

.row-gap {
    width: 6px;
}

/* workspace */
.workspace {
    display: flex;
    flex: 1;
    min-height: 0;
    background: linear-gradient(#3b3b3b, #8e8e8e 50%, #e6e6e6);
    border-top: 1px solid #555;
    border-bottom: 1px solid #666;
    font-family: "Liberation Sans", Arial, sans-serif;
}

.explorer {
    display: flex;
    flex-direction: column;
    flex: none;
    width: 201px;
    background: rgba(243, 243, 243, .79);
}

.current-element {
    flex: none;
    height: 14px;
    padding-left: 2px;
    border-bottom: 1px solid #b0b0b0;
    font: 7px/13px Roboto, Arial, sans-serif;
}

.current-element::after,
.exp.open::before {
    width: 4px;
    height: 4px;
    border: solid #555;
    border-width: 0 1px 1px 0;
    transform: rotate(45deg);
}

.current-element::after {
    top: 4px;
    right: 4px;
}

.explorer-body {
    position: relative;
    display: flex;
    flex: 1;
    min-height: 0;
    overflow: hidden;
}

.tree,
.tree ul {
    list-style: none;
    margin: 0;
    padding: 0;
}

.tree {
    flex: 1;
    padding: 1px 0 0 3px;
    font-size: 8px;
}

.tree ul {
    padding-left: 11px;
}

.node {
    display: flex;
    align-items: center;
    height: 12px;
    white-space: nowrap;
}

.node svg {
    width: 12px;
    height: 12px;
    margin-right: 2px;
}

.node::before {
    content: "";
    flex: none;
    width: 10px;
    height: 6px;
}

.node.open::before {
    width: 4px;
    height: 4px;
    margin: 0 3px;
    background: linear-gradient(135deg, transparent 50%, #222 50%);
}

.node.closed::before {
    width: 4px;
    margin: 0 3px;
    background: #b0b0b0;
    clip-path: polygon(0 0, 100% 50%, 0 100%);
}

.node.bold {
    font-size: 9px;
    font-weight: bold;
    color: #111;
}

.node.selected svg {
    margin-right: 0;
    background: #a9c8ec;
}

.node.selected span {
    padding: 0 5px 0 2px;
    background: #a9c8ec;
}

.scrollbar {
    display: flex;
    flex-direction: column;
    align-items: center;
    width: 12px;
    margin-bottom: 4px;
}

.scroll-arrow {
    margin: 5px 0;
    border: 3px solid transparent;
}

.scroll-arrow.up {
    border-bottom-color: #111;
    border-top: none;
}

.scroll-arrow.down {
    border-top-color: #111;
    border-bottom: none;
}

.scroll-track {
    flex: 1;
    align-self: stretch;
}

.scroll-thumb {
    display: flex;
    align-items: center;
    justify-content: center;
    height: 76%;
    background: rgba(120, 120, 120, .2);
}

.grip {
    width: 4px;
    height: 5px;
    background: repeating-linear-gradient(#777 0 1px, transparent 1px 2px);
}

.ghost-tip {
    position: absolute;
    left: 99px;
    top: 73px;
    width: 80px;
    color: rgba(255, 255, 255, .75);
}

.ghost-title {
    height: 15px;
    padding-left: 14px;
    background: rgba(255, 255, 255, .12);
    font: bold 11px/18px "Liberation Sans", Arial, sans-serif;
}

.ghost-row {
    display: flex;
    gap: 2px;
    margin-top: 1px;
    font-size: 9px;
}

.ghost-key,
.ghost-value {
    background: rgba(255, 255, 255, .12);
}

.ghost-key {
    width: 36px;
    padding-left: 12px;
}

.ghost-value {
    flex: 1;
    padding-left: 10px;
}

/* docked side strips */
.side-strip {
    flex: none;
    width: 18px;
    padding: 1px;
    background: rgba(232, 232, 232, .76);
    border-left: 1px solid rgba(255, 255, 255, .4);
}

.side-strip.left {
    width: 20px;
}

.side-tab {
    display: flex;
    flex-direction: column;
    align-items: center;
    gap: 2px;
    padding-bottom: 2px;
    background: #b4c4da;
}

.side-icon {
    width: 14px;
    height: 14px;
}

.side-text {
    writing-mode: vertical-rl;
    font: 9px/16px "Open Sans", sans-serif;
}

.left .side-text {
    transform: rotate(180deg);
}

.side-close {
    font: bold 9px/12px "Open Sans", sans-serif;
    color: #111;
}

/* 3D view */
.viewport {
    flex: 1;
    min-width: 0;
    overflow: hidden;
}

.scene {
    width: 100%;
    height: 100%;
}

.compass-text {
    font-size: 10px;
    font-weight: bold;
    text-anchor: middle;
    fill: #111;
}

.compass-text .far {
    fill: #555;
}

/* properties panel */
.properties {
    display: flex;
    flex-direction: column;
    flex: none;
    width: 206px;
    padding: 7px 3px 5px 1px;
    background: rgba(243, 243, 243, .79);
    border-right: 2px solid #777;
}

.element-select {
    flex: none;
    height: 13px;
    margin: 0 5px 0 6px;
    padding-left: 1px;
    border: 1px solid #9a9a9a;
    background: linear-gradient(270deg, #bdbdbd 12px, #dcdcdc 12px);
    font-size: 9px;
}

.element-select::after {
    right: 4px;
}

.pick-tools {
    display: flex;
    gap: 11px;
    padding: 7px 0 8px 10px;
}

.page-tabs {
    display: flex;
}

.page-tab {
    height: 12px;
    padding: 0 4px;
    border: 1px solid rgba(255, 255, 255, .5);
    border-bottom: none;
    background: rgba(255, 255, 255, .25);
    font: 7px/11px Roboto, Arial, sans-serif;
}

.page {
    display: flex;
    flex-direction: column;
    gap: 2px;
    flex: 1;
    min-height: 0;
    padding: 3px;
    border: 1px solid rgba(255, 255, 255, .45);
    background: rgba(255, 255, 255, .15);
}

.grid-box {
    flex: 1;
    min-height: 0;
    border: 1px solid #aaa;
    border-top: 2px solid #888;
    border-left-color: #777;
    overflow: hidden;
}

.grid-tools {
    display: flex;
    height: 15px;
    border-bottom: 1px solid #999;
}

.grid-tools .icon-btn {
    width: 14px;
}

.grid-tools .on {
    background: #a9c8ec;
}

.prop-grid {
    table-layout: fixed;
    width: 100%;
    height: 154px;
    margin-top: 2px;
    border-collapse: collapse;
    color: #333;
}

.prop-grid td,
.prop-grid th {
    padding: 0;
    vertical-align: top;
    white-space: nowrap;
    font: 7px/8px Roboto, Arial, sans-serif;
}

.prop-grid th {
    width: 75px;
    padding-left: 12px;
    text-align: left;
    font: 9px/9px "Liberation Sans", Arial, sans-serif;
}

.prop-grid td.exp {
    width: 15px;
    padding: 1px 0 0 4px;
    background: rgba(160, 170, 185, .12);
}

.prop-grid .cat th {
    padding-left: 0;
    font-weight: bold;
    color: #111;
}

.exp.open::before,
.exp.shut::before,
.sub::before {
    content: "";
    display: block;
}

.exp.shut::before,
.sub::before {
    width: 3px;
    height: 3px;
    border: solid #888;
    border-width: 1px 1px 0 0;
    transform: rotate(45deg);
}

.prop-grid th.sub {
    padding-left: 3px;
}

.sub::before {
    float: left;
    margin: 2px 6px 0 0;
}

.readonly {
    color: #888;
}

.help-box {
    display: flex;
    flex-direction: column;
    flex: none;
    height: 36px;
    padding: 3px;
    border: 1px solid #aaa;
    border-left-color: #777;
    line-height: 9px;
}

.help-box strong {
    color: #111;
}

/* document tabs */
.doc-tabs {
    display: flex;
    flex: none;
    align-items: center;
    gap: 20px;
    height: 16px;
    padding: 0 0 1px 4px;
    background: #f5f5f5;
}

.doc-tab {
    display: flex;
    align-items: center;
    gap: 5px;
    height: 14px;
    padding: 0 3px 0 2px;
    border-right: 1px solid #666;
    border-bottom: 1px solid #666;
    background: #c9dbf2;
    color: #222;
}

.doc-tab .icon-btn {
    font-size: 8px;
}

/* status bar */
.status-bar {
    display: flex;
    align-items: center;
    justify-content: space-between;
    flex: none;
    height: 18px;
    padding: 0 3px;
    background: #9cc5f3;
}

.status-tools {
    display: flex;
    gap: 2px;
}

.status-tools .icon-btn {
    width: 14px;
    height: 14px;
}

.status-tools .on {
    background: #fff;
}

.tool-gap {
    width: 4px;
}
```
